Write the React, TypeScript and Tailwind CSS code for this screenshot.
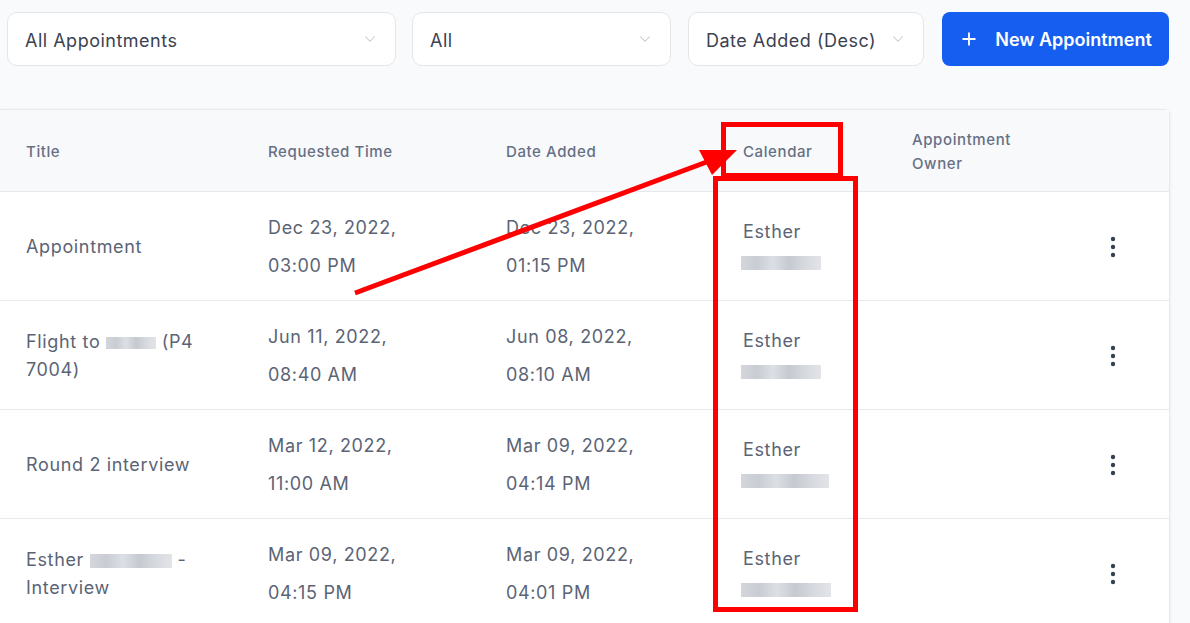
import { ChevronDown, Plus } from "lucide-react";

type Row = {
  title: React.ReactNode;
  req: [string, string];
  added: [string, string];
  blur: number;
};

function Blur({ w, h = 10 }: { w: number; h?: number }) {
  return (
    <span
      className="inline-block align-middle bg-[linear-gradient(90deg,#d4d6dc,#c9ccd3_20%,#dcdfe4_40%,#c6c9d0_60%,#d6d9de_80%,#e2e4e8)] blur-[0.6px]"
      style={{ width: w, height: h }}
    />
  );
}

const rows: Row[] = [
  { title: "Appointment", req: ["Dec 23, 2022,", "03:00 PM"], added: ["Dec 23, 2022,", "01:15 PM"], blur: 80 },
  {
    title: (
      <>
        Flight to <Blur w={50} h={12} /> (P4
        <br />
        7004)
      </>
    ),
    req: ["Jun 11, 2022,", "08:40 AM"],
    added: ["Jun 08, 2022,", "08:10 AM"],
    blur: 80,
  },
  { title: "Round 2 interview", req: ["Mar 12, 2022,", "11:00 AM"], added: ["Mar 09, 2022,", "04:14 PM"], blur: 88 },
  {
    title: (
      <>
        Esther <Blur w={82} h={14} /> -
        <br />
        Interview
      </>
    ),
    req: ["Mar 09, 2022,", "04:15 PM"],
    added: ["Mar 09, 2022,", "04:01 PM"],
    blur: 90,
  },
];

function Select({ label, w }: { label: string; w: string }) {
  return (
    <div className={`${w} h-[54px] flex items-center justify-between rounded-[10px] border border-[#e4e6eb] bg-white pl-[17px] pr-[16px]`}>
      <span className="pt-[2px] text-[18px] tracking-[0.5px] text-[#3b4252]">{label}</span>
      <ChevronDown className="h-[18px] w-[18px] text-[#c3c7cf]" strokeWidth={1.4} />
    </div>
  );
}

function Dots() {
  return (
    <svg width="6" height="22" viewBox="0 0 6 22" className="text-[#344054]">
      <circle cx="3" cy="3" r="2.2" fill="currentColor" />
      <circle cx="3" cy="11" r="2.2" fill="currentColor" />
      <circle cx="3" cy="19" r="2.2" fill="currentColor" />
    </svg>
  );
}

const cols = "grid grid-cols-[242px_238px_237px_169px_1fr_48px] pr-[32px]";

export default function App() {
  return (
    <div className="relative h-[623px] w-[1190px] overflow-hidden bg-[#f9fafb] font-['Inter',sans-serif]">
      <div className="flex items-center pl-[7px] pt-[12px]">
        <Select label="All Appointments" w="w-[389px]" />
        <div className="w-[16px]" />
        <Select label="All" w="w-[259px]" />
        <div className="w-[17px]" />
        <Select label="Date Added (Desc)" w="w-[236px]" />
        <div className="w-[18px]" />
        <button className="flex h-[54px] w-[227px] items-center justify-center gap-[16px] rounded-[8px] bg-[#165ef0] text-[18px] font-semibold text-white">
          <Plus className="h-[20px] w-[20px]" strokeWidth={2.2} />
          New Appointment
        </button>
      </div>

      <div className="mt-[43px] w-[1170px] rounded-tr-[6px] border-t border-r border-[#e7e9ee] bg-white shadow-[1px_0_3px_rgba(0,0,0,0.04)]">
        <div className={`${cols} h-[82px] items-center border-b border-[#e7e9ee] bg-[#f8f9fb] pt-[3px] text-[15px] font-medium leading-[24px] tracking-[0.6px] text-[#667085]`}>
          <div className="pl-[26px]">Title</div>
          <div className="pl-[26px]">Requested Time</div>
          <div className="pl-[26px]">Date Added</div>
          <div className="pl-[26px]">Calendar</div>
          <div className="pl-[26px]">
            Appointment
            <br />
            Owner
          </div>
          <div />
        </div>
        {rows.map((r, i) => (
          <div key={i} className={`${cols} h-[109px] items-center border-b border-[#e7e9ee] pt-[1px] text-[18px] tracking-[0.65px] text-[#5b6475]`}>
            <div className="pl-[26px] leading-[28px]">{r.title}</div>
            <div className="pl-[26px] leading-[38px]">
              {r.req[0]}
              <br />
              {r.req[1]}
            </div>
            <div className="pl-[26px] leading-[38px]">
              {r.added[0]}
              <br />
              {r.added[1]}
            </div>
            <div className="flex flex-col pl-[26px] pt-[2px]">
              <span className="leading-[24px]">Esther</span>
              <span className="mt-[4px] -ml-[2px]">
                <Blur w={r.blur} h={14} />
              </span>
            </div>
            <div />
            <div className="flex justify-center">
              <Dots />
            </div>
          </div>
        ))}
      </div>

      <svg className="pointer-events-none absolute left-0 top-0" width="1190" height="623">
        <rect x="723.5" y="124.5" width="117" height="51" fill="none" stroke="#ff0000" strokeWidth="5" />
        <rect x="715.5" y="178.5" width="140" height="431" fill="none" stroke="#ff0000" strokeWidth="5" />
        <line x1="355" y1="293" x2="712" y2="160" stroke="#ff0000" strokeWidth="5" />
        <polygon points="737,150 699,150 712,175" fill="#ff0000" />
      </svg>
    </div>
  );
}
